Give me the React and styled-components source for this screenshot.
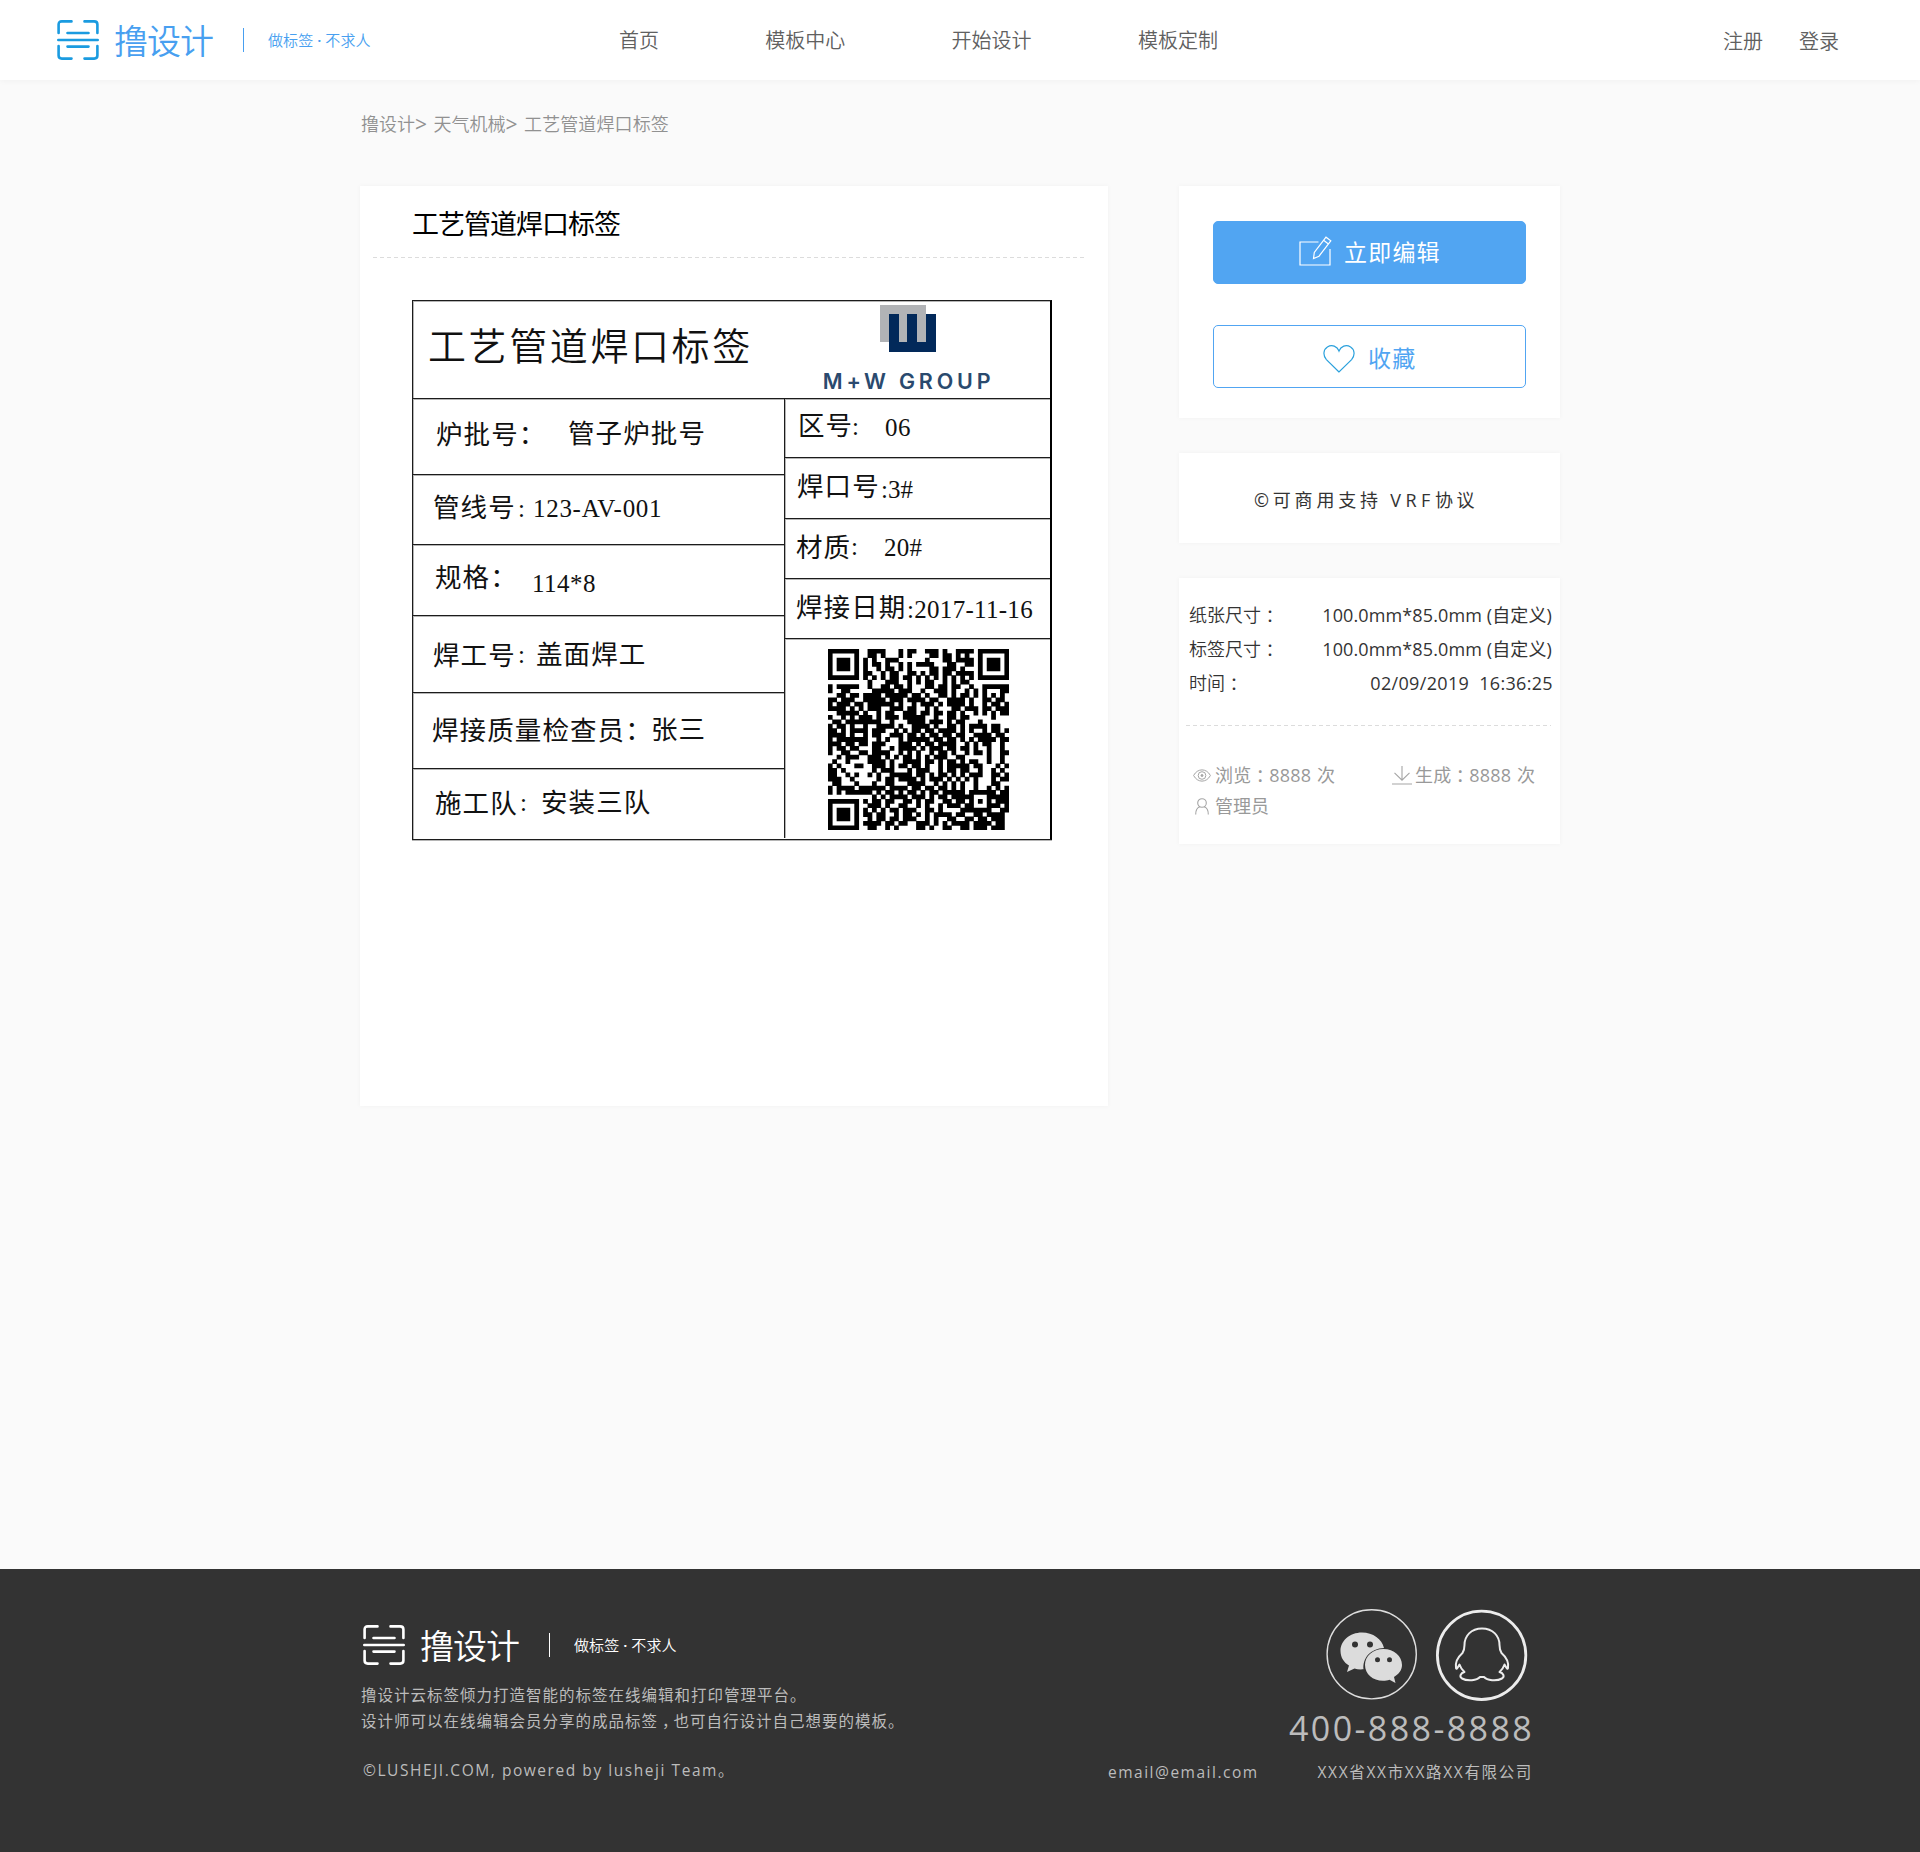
import React from "react";
import styled, { createGlobalStyle } from "styled-components";

const GlobalStyle = createGlobalStyle`
  * { box-sizing: border-box; }
  body {
    margin: 0;
    background: #fafafa;
    font-family: "Open Sans", "Noto Sans CJK SC", sans-serif;
    font-weight: 400;
    color: #333;
  }
`;

const Page = styled.div`
  display: flex;
  flex-direction: column;
  width: 1920px;
  height: 1852px;
  overflow: hidden;
`;

/* One run of text; `ls` is tracking, `ml`/`mt` the space before it. */
const Text = styled.span`
  display: block;
  flex: none;
  white-space: pre;
  font-size: ${(p) => p.size || 18}px;
  font-weight: ${(p) => p.weight || "inherit"};
  line-height: ${(p) => p.lh || 30}px;
  letter-spacing: ${(p) => p.ls || 0}px;
  margin-left: ${(p) => p.ml || 0}px;
  margin-top: ${(p) => p.mt || 0}px;
`;

/* Full-width punctuation set in the middle of its em box. */
const Mid = styled.span`
  margin-left: 0.25em;
  letter-spacing: -0.25em;
`;

/* ---------- header ---------- */
const Header = styled.header`
  display: flex;
  align-items: center;
  flex: none;
  height: 80px;
  padding: 0 80px 0 57px;
  background: #fff;
  box-shadow: 0 1px 6px rgba(0, 0, 0, 0.04);
  font-weight: 350;
`;

const BrandRow = styled.div`
  display: flex;
  align-items: center;
  flex: none;
  width: ${(p) => p.width}px;
  height: 40px;
  color: ${(p) => p.tone};
  font-weight: 350;
`;

const BrandName = styled.span`
  margin-left: 15px;
  width: 113px;
  padding-top: 2px;
  font-size: 34px;
  line-height: 40px;
  letter-spacing: -1px;
  white-space: nowrap;
`;

const BrandRule = styled.i`
  width: 1px;
  height: 24px;
  margin-left: 16px;
  background: currentColor;
`;

const Slogan = styled.span`
  display: flex;
  margin-left: 24px;
  font-size: 15px;
  line-height: 24px;
  letter-spacing: 0.1px;
`;

const Dot = styled.span`
  width: 12px;
  font-weight: 600;
  text-align: center;
`;

const Nav = styled.nav`
  display: flex;
  gap: 106.3px;
  width: 1104px;
  padding-top: 2px;
`;

const Account = styled.div`
  display: flex;
  gap: 36px;
  padding-top: 4px;
`;

const NavLink = styled.a`
  font-size: 20px;
  line-height: 30px;
  color: #606060;
`;

/* ---------- content ---------- */
const Content = styled.main`
  width: 1200px;
  height: 1489px;
  flex: none;
  margin-left: 360px;
`;

const Crumbs = styled.div`
  display: flex;
  height: 106px;
  padding: 29px 0 0 1px;
  font-weight: 350;
  color: #919191;
`;

const Columns = styled.div`
  display: flex;
  justify-content: space-between;
  align-items: flex-start;
`;

const Card = styled.section`
  background: #fff;
  box-shadow: 0 0 5px rgba(0, 0, 0, 0.04);
  width: ${(p) => p.width}px;
  height: ${(p) => p.height}px;
`;

const Side = styled.aside`
  display: flex;
  flex-direction: column;
  gap: 35px;
`;

const CardTitle = styled.h1`
  margin: 0;
  height: 71px;
  padding: 18px 0 0 52px;
  font-size: 27px;
  line-height: 40px;
  letter-spacing: -1px;
  font-weight: 400;
  color: #000;
`;

const Dashes = styled.div`
  width: ${(p) => p.width}px;
  height: 1px;
  margin-left: ${(p) => p.ml}px;
  background: repeating-linear-gradient(90deg, #dcdcdc 0 4px, transparent 4px 7px);
`;

/* ---------- weld label ---------- */
const Label = styled.div`
  width: 640px;
  height: 540px;
  margin: 42px 0 0 52px;
  border: 1px solid #1c1c1c;
  border-right: 2px solid #000;
  box-shadow: inset 0 1px #b5b5b5, inset 1px 0 #b5b5b5, 0 1px #b5b5b5;
  color: #111;
`;

const LabelHead = styled.div`
  display: flex;
  height: 97px;
  padding-left: 15px;
`;

const LabelBody = styled.div`
  display: flex;
`;

const LabelCol = styled.div`
  width: ${(p) => p.width}px;
  border-left: ${(p) => (p.divided ? "1px solid #1c1c1c" : "0")};
  box-shadow: ${(p) => (p.divided ? "inset 1px 0 #b5b5b5" : "none")};
`;

const Cell = styled.div`
  display: flex;
  align-items: flex-start;
  height: ${(p) => p.h}px;
  padding-left: ${(p) => p.pad}px;
  border-top: 1px solid #1c1c1c;
  box-shadow: inset 0 1px #b5b5b5;
`;

const Word = styled(Text)`
  width: ${(p) => (p.w ? p.w + "px" : "auto")};
  font-size: 26.5px;
  letter-spacing: 1.1px;
`;

const Serif = styled(Text)`
  width: ${(p) => (p.w ? p.w + "px" : "auto")};
  font-family: "Liberation Serif", serif;
  font-size: 25px;
`;

const Company = styled.div`
  margin-left: 70px;
  width: 180px;
  padding-top: 4px;
`;

const CompanyMark = styled.svg`
  display: block;
  margin-left: 57px;
`;

const CompanyName = styled.div`
  margin-top: 16px;
  font-family: Inter, sans-serif;
  font-weight: 600;
  font-size: 21.5px;
  line-height: 26px;
  letter-spacing: 3.8px;
  white-space: nowrap;
  color: #2a4a6e;
`;

/* ---------- side cards ---------- */
const Actions = styled.div`
  display: flex;
  flex-direction: column;
  gap: 41px;
  padding: 35px 34px;
`;

const Button = styled.button`
  display: flex;
  align-items: flex-start;
  width: 313px;
  height: 63px;
  padding: ${(p) => p.top}px 0 0 ${(p) => p.pad}px;
  border: 1px solid #51a5f2;
  border-radius: 5px;
  background: ${(p) => (p.primary ? "#51a5f2" : "#fff")};
  color: ${(p) => (p.primary ? "#fff" : "#51a5f2")};
  font-family: inherit;
`;

const License = styled.div`
  display: flex;
  padding: 32px 0 0 75px;
`;

const InfoRow = styled.div`
  display: flex;
  justify-content: space-between;
  height: 34px;
  padding: 0 ${(p) => p.right || 8}px 0 10px;
`;

const InfoList = styled.div`
  height: 147px;
  padding-top: 22px;
`;

const Stats = styled.div`
  display: grid;
  grid-template-columns: 199px 160px;
  grid-template-rows: 31px 31px;
  padding: 34px 0 0 14px;
  color: #999;
`;

const Stat = styled.div`
  display: flex;
  align-items: center;
  height: 30px;
  word-spacing: 1px;
`;

const IconSlot = styled.span`
  display: flex;
  width: ${(p) => p.w}px;
  padding-left: ${(p) => p.pad || 0}px;
  flex: none;
`;

/* ---------- footer ---------- */
const Footer = styled.footer`
  display: flex;
  flex: none;
  height: 283px;
  padding-left: 361px;
  background: #333;
  color: #bcbcbc;
`;

const FooterLeft = styled.div`
  width: 747px;
  padding-top: 56px;
`;

const FooterBrand = styled.div`
  padding: 0 0 17px 2px;
`;

const FooterRight = styled.div`
  width: 425px;
  padding-top: 40px;
`;

const Socials = styled.div`
  display: flex;
  gap: 18px;
  height: 92px;
  padding-left: 218px;
`;

const Phone = styled.div`
  margin: 4px 0 0 181px;
  font-size: 34px;
  line-height: 46px;
  letter-spacing: 2.4px;
  white-space: nowrap;
`;

const Contact = styled.div`
  display: flex;
  justify-content: space-between;
  padding-top: 6px;
`;

/* ---------- drawings ---------- */
const LogoMark = ({ color }) => (
  <svg width="42" height="40" viewBox="0 0 42 40" fill="none" stroke={color} strokeWidth="2.6" strokeLinecap="round">
    <path d="M1.6 13V4.5Q1.6 1.4 4.8 1.4H14.5M27.5 1.4H37.2Q40.4 1.4 40.4 4.5V13M1.6 26V35.5Q1.6 38.6 4.8 38.6H14.5M27.5 38.6H37.2Q40.4 38.6 40.4 35.5V26" />
    <path d="M10.5 13H31.5M1.3 20H40.7M10.5 26.6H31.5" />
  </svg>
);

const Brand = ({ tone, mark, width }) => (
  <BrandRow tone={tone} width={width}>
    <LogoMark color={mark} />
    <BrandName>撸设计</BrandName>
    <BrandRule />
    <Slogan>做标签<Dot>·</Dot>不求人</Slogan>
  </BrandRow>
);

/* Columns 8-32 of the first eight module rows. */
const QR_TOP = [
  ".####...#.##..###.#..####",
  ".##.#...#.#....##.##.#.#.",
  "#.#..###......#...##.####",
  "#.##.#..#.#.####...##..##",
  "#..#.##.#.#....##.###.#..",
  "##..#.##..##.#.##.##.####",
  "#.#.#.##.##.#.#.#.#.#.#.#",
  ".#...###..#.#.##..#.#.##.",
];
/* Full rows 8-32. */
const QR_MID = [
  "#.#####..#..##.##.#...##.##.##..#..######",
  "#..##.#...#####.###..#..###.#..#.#.#...##",
  "..##.##.####.#####.##.#..##.#.##.#.#.#.#.",
  "##.####.#####.###.####.##..####.#..##.##.",
  "#.###.##.######.#..#.###.#.####.#..#.##.#",
  "####.###.###..###.##..#.#...##.###.##.###",
  "..####..#..#.##..###.##.##.##.#..#.#.#.##",
  "#..#.#.###.#.###.#####..#..##.##.....#...",
  ".##.##.#####..#...####.###.#.##...#......",
  "#.##.##.#..####.#..####.#..##.#.####.##..",
  "##.#.#.##.###..#.#.##.##.####.#.#..#.##.#",
  "####.##.#.##..###.##.#.##.##.##..####.##.",
  "#.####.##..#.#..#.#####.##.##.#.#.####.##",
  "###.#####.###...###.#.##.####..#.#.##..#.",
  "#.##.##...##..#.####.#.###.##.##.#..#..#.",
  "#..##.###.####..#.#.#..#.##.#..#.##.#..##",
  "..#.###..###.#.#.##.#.#.###..##.....#..#.",
  ".#..#....####.#..####.##.#.##.#.##..#..#.",
  "#.#....#..###.#.##.##.#..#.#####.##...#.#",
  "##.#..#...#.###...#.###..#.##.##..#..#.#.",
  "##..#.#..#.#..#####.##.#.##.#.#.###..##.#",
  "###..##....#.##.####.#.###.#.#.#.#...#.##",
  ".##.......#..##...####..#.#.#.#..#...##..",
  "#.###########.####.##.##.##.#.#..#..#.#.#",
  "#.#.######.#.##.#.##.#.##.#####..#..##.##",
];
/* Columns 8-40 of the last eight module rows. */
const QR_BOTTOM = [
  "..#.#.####.###.#.##.####.#.#.####",
  "#.##.##..##.#.##..##.##.#...#.###",
  ".###.#..##..#.#..#.###.##.#####.#",
  "#.#.#.##.###..##.#....##.####..##",
  "##.##..#.##.#.#.####.##..##.####.",
  ".#.##.##.###..#.#..##..##.##.###.",
  "####.##.##..###.#.#.####.####.##.",
  ".##..#.#....##.#..##..##.###.###.",
];

const finder = (r, c) => {
  const d = Math.max(Math.abs(r - 3), Math.abs(c - 3));
  return d === 3 || d < 2;
};

const qrDark = (r, c) => {
  const top = r < 8;
  const bottom = r > 32;
  if (c < 8 && (top || bottom)) {
    const rr = top ? r : r - 34;
    return rr >= 0 && rr < 7 && c < 7 && finder(rr, c);
  }
  if (top && c > 32) return r < 7 && c > 33 && finder(r, c - 34);
  if (r >= 32 && r <= 36 && c >= 32 && c <= 36) {
    return Math.max(Math.abs(r - 34), Math.abs(c - 34)) !== 1;
  }
  if (c === 6 && !top && !bottom) return r % 2 === 0;
  if (top) return QR_TOP[r][c - 8] === "#";
  if (bottom) return QR_BOTTOM[r - 33][c - 8] === "#";
  return QR_MID[r - 8][c] === "#";
};

const QrSvg = styled.svg`
  display: block;
  margin-top: 10px;
`;

const QrCode = () => {
  let d = "";
  for (let r = 0; r < 41; r++)
    for (let c = 0; c < 41; c++) if (qrDark(r, c)) d += `M${c - 0.04} ${r - 0.04}h1.08v1.08h-1.08z`;
  return (
    <QrSvg width="181" height="181" viewBox="0 0 41 41">
      <path d={d} fill="#000" />
    </QrSvg>
  );
};

const EditIcon = () => (
  <svg width="33" height="30" viewBox="0 0 33 30" fill="none" stroke="#fff" strokeWidth="1.2">
    <path d="M19.5 6H1V29H31V13" />
    <path d="M14.5 22.5L15.3 16.5L27 1.2L31.8 4.8L20 20.2ZM24.6 4.3L29.4 8" />
  </svg>
);

const HeartIcon = () => (
  <svg width="32" height="28" viewBox="0 0 32 28" fill="none" stroke="#2aa0dc" strokeWidth="1.2">
    <path d="M16 27L3.4 14.6C-.3 10.6.3 4.5 4.4 2C9-.8 14.2 1.2 16 6C17.8 1.2 23-.8 27.6 2C31.7 4.5 32.3 10.6 28.6 14.6Z" />
  </svg>
);

const EyeIcon = () => (
  <svg width="18" height="13" viewBox="0 0 18 13" fill="none" stroke="#a5a5a5">
    <path d="M.6 6.5C4.5-1 13.5-1 17.4 6.5C13.5 14 4.5 14 .6 6.5Z" />
    <circle cx="9" cy="6.5" r="3.8" />
    <circle cx="9" cy="6.5" r="1" fill="#a5a5a5" />
  </svg>
);

const DownIcon = () => (
  <svg width="20" height="19" viewBox="0 0 20 19" fill="none" stroke="#a5a5a5" strokeWidth="1.1">
    <path d="M10 0V14M2.5 6.8L10 14.2L17.5 6.8M0 18H20" />
  </svg>
);

const UserIcon = () => (
  <svg width="14" height="17" viewBox="0 0 14 17" fill="none" stroke="#a5a5a5" strokeWidth="1.1">
    <circle cx="7" cy="5" r="4.3" />
    <path d="M.7 16.5C.7 12 2.5 9.4 5 8.8M13.3 16.5C13.3 12 11.5 9.4 9 8.8" />
  </svg>
);

const WechatIcon = () => (
  <svg width="92" height="92" viewBox="0 0 92 92">
    <circle cx="45.7" cy="45.3" r="44.6" fill="none" stroke="#ddd" strokeWidth="1.4" />
    <path d="M36 23.5C23.5 23.5 14.5 31.8 14.5 42C14.5 48.5 18 53.5 23 56.5L21 63L28.5 59.5C31 60.3 34 60.6 37.5 60.3C36.5 49 44.5 39.5 58 39C56 30 47 23.5 36 23.5Z" fill="#dcdcdc" />
    <path d="M57.5 40C46.8 40 39 47 39 56C39 65 46.8 71.8 57 71.8C59.5 71.8 61.5 71.4 63.5 70.8L69.5 74L68 68C73 65 76 61 76 56C76 47 68 40 57.5 40Z" fill="#dcdcdc" />
    <g fill="#333">
      <circle cx="29" cy="35.5" r="3" />
      <circle cx="44" cy="35.5" r="3" />
      <circle cx="51.5" cy="50.8" r="2.5" />
      <circle cx="63.5" cy="50.8" r="2.5" />
    </g>
  </svg>
);

const QqIcon = () => (
  <svg width="92" height="92" viewBox="0 0 92 92" fill="none" stroke="#ececec">
    <circle cx="45.6" cy="46.3" r="44.2" strokeWidth="2.8" />
    <path
      d="M46 19.5C35 19.5 28.5 27 28.5 36C28.5 38.5 28 41.5 26.5 44C22 48 19 53 20 59C20.3 60.5 21 60 23.5 55.5C24.5 58.5 26 61 28.5 63C24.5 64 23 67.5 26 69.5C31.5 72.5 41 71.5 44 68H48C51 71.5 60.5 72.5 66 69.5C69 67.5 67.5 64 63.5 63C66 61 67.5 58.5 68.5 55.5C71 60 71.7 60.5 72 59C73 53 70 48 65.5 44C64 41.5 63.5 38.5 63.5 36C63.5 27 57 19.5 46 19.5Z"
      strokeWidth="2"
      strokeLinejoin="round"
    />
  </svg>
);

export default function App() {
  return (
    <Page>
      <GlobalStyle />
      <Header>
        <Brand tone="#489ff0" mark="#1a9be0" width={562} />
        <Nav>
          {["首页", "模板中心", "开始设计", "模板定制"].map((t) => (
            <NavLink key={t}>{t}</NavLink>
          ))}
        </Nav>
        <Account>
          <NavLink>注册</NavLink>
          <NavLink>登录</NavLink>
        </Account>
      </Header>

      <Content>
        <Crumbs>
          <Text>撸设计</Text>
          <Text size={21} weight={400}>{">"}</Text>
          <Text ml={6.5}>天气机械</Text>
          <Text size={21} weight={400}>{">"}</Text>
          <Text ml={6.5} ls={0.1}>工艺管道焊口标签</Text>
        </Crumbs>

        <Columns>
          <Card width={748} height={920}>
            <CardTitle>工艺管道焊口标签</CardTitle>
            <Dashes width={714} ml={13} />
            <Label>
              <LabelHead>
                <Text size={38} ls={2.6} lh={50} mt={19} weight={350}>工艺管道焊口标签</Text>
                <Company>
                  <CompanyMark width="56" height="47" viewBox="0 0 56 47">
                    <path d="M0 0H46V37H0Z" fill="#b1b3b6" />
                    <path d="M9 9H19V37H27V9H37V37H46V9H56V47H9Z" fill="#02295a" />
                  </CompanyMark>
                  <CompanyName>M+W GROUP</CompanyName>
                </Company>
              </LabelHead>
              <LabelBody>
                <LabelCol width={371}>
                  <Cell h={76} pad={23}>
                    <Word w={132} mt={20}>炉批号：</Word>
                    <Word mt={19}>管子炉批号</Word>
                  </Cell>
                  <Cell h={70} pad={20}>
                    <Word w={85} mt={17}>管线号</Word>
                    <Serif w={15} mt={19}>:</Serif>
                    <Serif mt={19} ls={0.7}>123-AV-001</Serif>
                  </Cell>
                  <Cell h={71} pad={22}>
                    <Word w={97} mt={17}>规格：</Word>
                    <Serif mt={24} ls={0.5}>114*8</Serif>
                  </Cell>
                  <Cell h={77} pad={20}>
                    <Word w={85} mt={24}>焊工号</Word>
                    <Serif w={18} mt={24}>:</Serif>
                    <Word mt={23}>盖面焊工</Word>
                  </Cell>
                  <Cell h={76} pad={19}>
                    <Word w={219} mt={22}>焊接质量检查员：</Word>
                    <Word mt={21}>张三</Word>
                  </Cell>
                  <Cell h={70} pad={22}>
                    <Word w={85} mt={19}>施工队</Word>
                    <Serif w={21} mt={19}>:</Serif>
                    <Word mt={18}>安装三队</Word>
                  </Cell>
                </LabelCol>
                <LabelCol width={266} divided>
                  <Cell h={59} pad={13}>
                    <Word w={54} mt={11}>区号</Word>
                    <Serif w={33} mt={13}>:</Serif>
                    <Serif mt={14} ls={0.5}>06</Serif>
                  </Cell>
                  <Cell h={61} pad={12}>
                    <Word w={84} mt={13}>焊口号</Word>
                    <Serif mt={17}>:3#</Serif>
                  </Cell>
                  <Cell h={60} pad={11}>
                    <Word w={55} mt={13}>材质</Word>
                    <Serif w={33} mt={13}>:</Serif>
                    <Serif mt={14} ls={0.3}>20#</Serif>
                  </Cell>
                  <Cell h={60} pad={11}>
                    <Word w={111} mt={13}>焊接日期</Word>
                    <Serif mt={16} ls={0.3}>:2017-11-16</Serif>
                  </Cell>
                  <Cell h={200} pad={43}>
                    <QrCode />
                  </Cell>
                </LabelCol>
              </LabelBody>
            </Label>
          </Card>

          <Side>
            <Card width={381} height={232}>
              <Actions>
                <Button primary pad={85} top={14}>
                  <EditIcon />
                  <Text size={23} ls={1.2} ml={12} mt={1}>立即编辑</Text>
                </Button>
                <Button pad={109} top={19}>
                  <HeartIcon />
                  <Text size={23} ls={1.2} ml={13} mt={-2}>收藏</Text>
                </Button>
              </Actions>
            </Card>
            <Card width={381} height={90}>
              <License>
                <Text ls={3.8}>©可商用支持</Text>
                <Text ls={4.5} ml={8.5}>VRF</Text>
                <Text ls={3.6}>协议</Text>
              </License>
            </Card>
            <Card width={381} height={266}>
              <InfoList>
                <InfoRow>
                  <Text weight={350}>纸张尺寸<Mid>：</Mid></Text>
                  <Text ls={0.12}>100.0mm*85.0mm (自定义)</Text>
                </InfoRow>
                <InfoRow>
                  <Text weight={350}>标签尺寸<Mid>：</Mid></Text>
                  <Text ls={0.12}>100.0mm*85.0mm (自定义)</Text>
                </InfoRow>
                <InfoRow right={7}>
                  <Text weight={350}>时间<Mid>：</Mid></Text>
                  <Text ls={0.33}>{"02/09/2019  16:36:25"}</Text>
                </InfoRow>
              </InfoList>
              <Dashes width={365} ml={7} />
              <Stats>
                <Stat>
                  <IconSlot w={22}><EyeIcon /></IconSlot>
                  <Text ls={0.15}>浏览<Mid>：</Mid>8888 次</Text>
                </Stat>
                <Stat>
                  <IconSlot w={23}><DownIcon /></IconSlot>
                  <Text ls={0.15}>生成<Mid>：</Mid>8888 次</Text>
                </Stat>
                <Stat>
                  <IconSlot w={22} pad={2}><UserIcon /></IconSlot>
                  <Text>管理员</Text>
                </Stat>
              </Stats>
            </Card>
          </Side>
        </Columns>
      </Content>

      <Footer>
        <FooterLeft>
          <FooterBrand>
            <Brand tone="#fff" mark="#fff" width={400} />
          </FooterBrand>
          <Text size={15.5} ls={1} lh={26}>撸设计云标签倾力打造智能的标签在线编辑和打印管理平台。</Text>
          <Text size={15.5} ls={1} lh={26}>设计师可以在线编辑会员分享的成品标签<Mid>，</Mid>也可自行设计自己想要的模板。</Text>
          <Text size={15.5} ls={1.55} lh={26} mt={23} ml={2}>©LUSHEJI.COM, powered by lusheji Team。</Text>
        </FooterLeft>
        <FooterRight>
          <Socials>
            <WechatIcon />
            <QqIcon />
          </Socials>
          <Phone>400-888-8888</Phone>
          <Contact>
            <Text size={15.5} ls={1.5}>email@email.com</Text>
            <Text size={15.5} ls={1.65}>XXX省XX市XX路XX有限公司</Text>
          </Contact>
        </FooterRight>
      </Footer>
    </Page>
  );
}
